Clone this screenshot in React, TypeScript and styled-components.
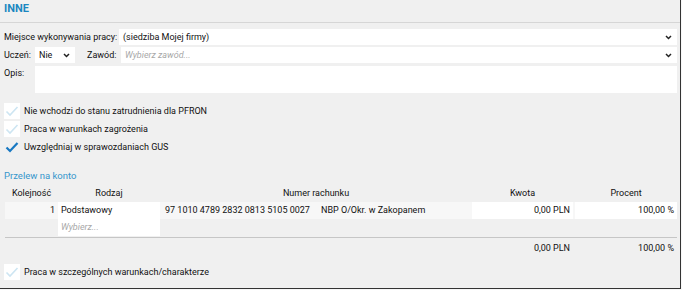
import styled, { createGlobalStyle } from 'styled-components';

const GlobalStyle = createGlobalStyle`
  html, body {
    margin: 0;
    padding: 0;
    background: #f7f7f7;
  }
  body {
    font-family: Roboto, "Open Sans", sans-serif;
    font-size: 9px;
    color: #111;
  }
`;

const Frame = styled.div`
  width: 681px;
  height: 289px;
  box-sizing: border-box;
  border-right: 1px solid #333;
  border-bottom: 1px solid #333;
  background: #f0f0f0;
  padding: 0 3px 0 4px;
  overflow: hidden;
`;

const Title = styled.div`
  font-size: 11px;
  font-weight: 700;
  color: #1b87c0;
  height: 23px;
  line-height: 17px;
  margin: 0 -3px 0 -4px;
  padding-left: 4px;
  border-bottom: 1px solid #d6d6d6;
  box-sizing: border-box;
`;

const FieldRow = styled.div<{ $top: number }>`
  display: flex;
  align-items: center;
  height: 16px;
  margin-top: ${p => p.$top}px;
`;

const Label = styled.div<{ $width: number; $gap?: number }>`
  width: ${p => p.$width}px;
  margin-left: ${p => p.$gap ?? 0}px;
  flex: none;
  white-space: nowrap;
`;

const Field = styled.div<{ $width?: number }>`
  height: 16px;
  background: #fff;
  display: flex;
  align-items: center;
  padding: 0 5px 0 4px;
  box-sizing: border-box;
  ${p => (p.$width ? `width: ${p.$width}px; flex: none;` : 'flex: 1;')}
`;

const FieldText = styled.span<{ $placeholder?: boolean }>`
  flex: 1;
  white-space: nowrap;
  font-style: ${p => (p.$placeholder ? 'italic' : 'normal')};
  color: ${p => (p.$placeholder ? '#a8a8a8' : '#111')};
`;

const TextArea = styled.div`
  flex: 1;
  height: 27px;
  background: #fff;
`;

const OpisRow = styled.div`
  display: flex;
  margin-top: 3px;
`;

const OpisLabel = styled.div`
  width: 31px;
  line-height: 14px;
`;

const Checks = styled.div<{ $top: number }>`
  display: flex;
  flex-direction: column;
  gap: 2px;
  margin-top: ${p => p.$top}px;
`;

const CheckRow = styled.div`
  display: flex;
  align-items: center;
  gap: 4px;
  height: 16px;
`;

const Box = styled.div<{ $checked: boolean }>`
  width: 16px;
  height: 16px;
  box-sizing: border-box;
  background: ${p => (p.$checked ? 'transparent' : '#fff')};
  display: flex;
  align-items: center;
  justify-content: center;
`;

const SectionLink = styled.div`
  color: #3596cc;
  font-size: 9.5px;
  margin-top: 13px;
  height: 16px;
  line-height: 16px;
`;

const TableGrid = styled.div`
  display: grid;
  grid-template-columns: 53px 102px 155px 157px 101px 2px 102px;
  margin-left: 1px;
  margin-top: 1px;
`;

const HeadCell = styled.div<{ $span?: number }>`
  text-align: center;
  height: 17px;
  line-height: 17px;
  grid-column: span ${p => p.$span ?? 1};
`;

const Cell = styled.div<{ $bg?: string; $align?: string; $placeholder?: boolean; $pad?: number }>`
  height: 17px;
  line-height: 17px;
  background: ${p => p.$bg ?? 'transparent'};
  text-align: ${p => p.$align ?? 'left'};
  padding: 0 ${p => p.$pad ?? 3}px;
  white-space: nowrap;
  overflow: hidden;
  font-style: ${p => (p.$placeholder ? 'italic' : 'normal')};
  color: ${p => (p.$placeholder ? '#a8a8a8' : '#111')};
`;

const TableRule = styled.div`
  grid-column: 1 / -1;
  height: 1px;
  background: #c6c6c6;
  margin-top: 1px;
`;

const TotalCell = styled.div<{ $col: string }>`
  grid-column: ${p => p.$col};
  text-align: right;
  padding: 0 3px;
  height: 18px;
  line-height: 18px;
  margin-top: 1px;
`;

function Chevron() {
  return (
    <svg width="7" height="5" viewBox="0 0 7 5">
      <polyline points="1,1 3.5,3.5 6,1" fill="none" stroke="#222" strokeWidth="1.5" />
    </svg>
  );
}

function Check({ checked }: { checked: boolean }) {
  return (
    <svg width="14" height="12" viewBox="0 0 14 12">
      <polyline
        points="1.5,6.5 5,10 12.5,2"
        fill="none"
        stroke={checked ? '#1878c2' : '#cde5f2'}
        strokeWidth={checked ? 2.2 : 1.6}
      />
    </svg>
  );
}

function CheckItem({ checked, label }: { checked: boolean; label: string }) {
  return (
    <CheckRow>
      <Box $checked={checked}>
        <Check checked={checked} />
      </Box>
      <span>{label}</span>
    </CheckRow>
  );
}

export default function App() {
  return (
    <Frame>
      <GlobalStyle />
      <Title>INNE</Title>

      <FieldRow $top={6}>
        <Label $width={115}>Miejsce wykonywania pracy:</Label>
        <Field>
          <FieldText>(siedziba Mojej firmy)</FieldText>
          <Chevron />
        </Field>
      </FieldRow>

      <FieldRow $top={2}>
        <Label $width={31}>Uczeń:</Label>
        <Field $width={40}>
          <FieldText>Nie</FieldText>
          <Chevron />
        </Field>
        <Label $width={34} $gap={12}>Zawód:</Label>
        <Field>
          <FieldText $placeholder>Wybierz zawód...</FieldText>
          <Chevron />
        </Field>
      </FieldRow>

      <OpisRow>
        <OpisLabel>Opis:</OpisLabel>
        <TextArea />
      </OpisRow>

      <Checks $top={10}>
        <CheckItem checked={false} label="Nie wchodzi do stanu zatrudnienia dla PFRON" />
        <CheckItem checked={false} label="Praca w warunkach zagrożenia" />
        <CheckItem checked label="Uwzględniaj w sprawozdaniach GUS" />
      </Checks>

      <SectionLink>Przelew na konto</SectionLink>

      <TableGrid>
        <HeadCell>Kolejność</HeadCell>
        <HeadCell>Rodzaj</HeadCell>
        <HeadCell $span={2}>Numer rachunku</HeadCell>
        <HeadCell>Kwota</HeadCell>
        <HeadCell />
        <HeadCell>Procent</HeadCell>

        <Cell $bg="#f7f7f7" $align="right">1</Cell>
        <Cell $bg="#fff">Podstawowy</Cell>
        <Cell $bg="#f7f7f7" $pad={5}>97 1010 4789 2832 0813 5105 0027</Cell>
        <Cell $bg="#f7f7f7" $pad={6}>NBP O/Okr. w Zakopanem</Cell>
        <Cell $bg="#fff" $align="right">0,00 PLN</Cell>
        <Cell $bg="#f7f7f7" $pad={0} />
        <Cell $bg="#fff" $align="right">100,00 %</Cell>

        <Cell />
        <Cell $bg="#fff" $placeholder>Wybierz...</Cell>
        <Cell />
        <Cell />
        <Cell />
        <Cell $pad={0} />
        <Cell />

        <TableRule />
        <TotalCell $col="5">0,00 PLN</TotalCell>
        <TotalCell $col="7">100,00 %</TotalCell>
      </TableGrid>

      <Checks $top={7}>
        <CheckItem checked={false} label="Praca w szczególnych warunkach/charakterze" />
      </Checks>
    </Frame>
  );
}
